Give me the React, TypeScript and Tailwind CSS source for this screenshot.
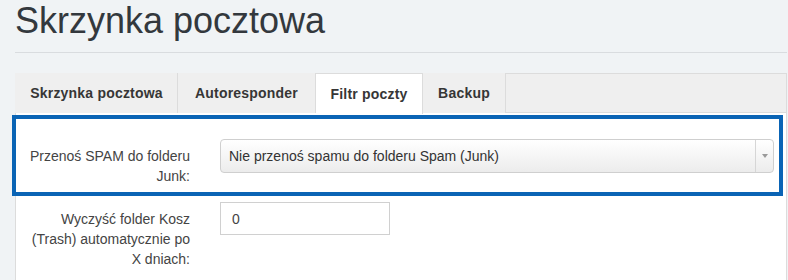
import { useState } from 'react';
import clsx from 'clsx';

const TABS = [
  { label: 'Skrzynka pocztowa', w: 'w-[163px]' },
  { label: 'Autoresponder', w: 'w-[138px]' },
  { label: 'Filtr poczty', w: 'w-[107px]' },
  { label: 'Backup', w: 'w-[83px]' },
];

export default function App() {
  const [active, setActive] = useState(2);

  return (
    <div
      className="w-[788px] h-[280px] overflow-hidden bg-[#f0f3f5] pl-[15px] pr-[1px] text-[#333]"
      style={{ fontFamily: '"Liberation Sans", Arial, sans-serif' }}
    >
      {/* Page title */}
      <h1 className="pt-[1px] text-[36px] leading-[40px] font-normal text-[#33383d]">
        Skrzynka pocztowa
      </h1>
      <div className="mt-[11px] h-px bg-[#d9dcdf]" />

      {/* Panel */}
      <div className="mt-[20px]">
        {/* Tabs */}
        <div className="flex h-[40px] border border-[#dcdcdc] bg-[#efefef]">
          {TABS.map((t, i) => (
            <button
              key={t.label}
              onClick={() => setActive(i)}
              className={clsx(
                'h-[40px] -mt-px text-center text-[14px] font-bold border-r border-[#dcdcdc] text-[#363636] tracking-[0.2px]',
                t.w,
                i === 0 && '-ml-px pl-px',
                i === active ? 'bg-white h-[41px] border-t border-t-[#dcdcdc]' : 'bg-[#efefef]'
              )}
            >
              {t.label}
            </button>
          ))}
        </div>

        {/* Body */}
        <div className="bg-white border-x border-[#dcdcdc] h-[200px] pt-[2px] text-[14px] leading-[20px] text-[#444]">
          {/* Highlighted row */}
          <div className="-ml-[4px] mr-[3px] border-4 border-[#0a64b5] pt-[20px] pb-[6px] flex">
            <div className="w-[174px] flex justify-end shrink-0">
              <label className="w-[164px] text-right pt-[7px]">Przenoś SPAM do folderu Junk:</label>
            </div>
            <div className="ml-[30px] mr-[5px] flex-1 h-[34px] flex rounded-[4px] border border-[#cfcfcf] bg-gradient-to-b from-white to-[#ececec]">
              <span className="flex-1 pl-[8px] leading-[32px] text-[#333]">
                Nie przenoś spamu do folderu Spam (Junk)
              </span>
              <span className="w-[18px] border-l border-[#d6d6d6] flex items-center justify-center">
                <svg width="6" height="4" viewBox="0 0 6 4">
                  <path d="M0 0h6L3 4z" fill="#9a9a9a" />
                </svg>
              </span>
            </div>
          </div>

          {/* Second row */}
          <div className="mt-[6px] flex">
            <div className="w-[174px] flex justify-end shrink-0">
              <label className="w-[164px] text-right pt-[7px]">
                Wyczyść folder Kosz (Trash) automatycznie po X dniach:
              </label>
            </div>
            <input
              defaultValue="0"
              className="ml-[30px] w-[170px] h-[33px] border border-[#d0d0d0] px-[11px] text-[14px] text-[#444] outline-none"
              style={{ fontFamily: '"Liberation Sans", Arial, sans-serif' }}
            />
          </div>
        </div>
      </div>
    </div>
  );
}
